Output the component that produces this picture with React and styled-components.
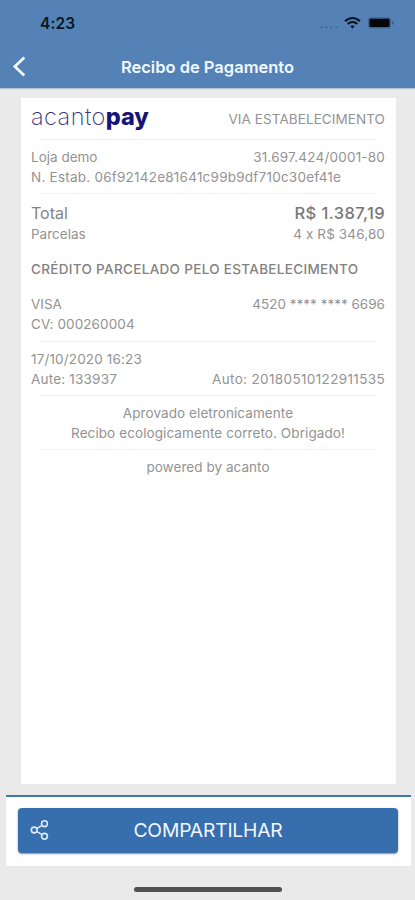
import React from "react";
import styled, { createGlobalStyle } from "styled-components";

const GlobalStyle = createGlobalStyle`
  * { box-sizing: border-box; }
  body { margin: 0; background: #eaeaea; }
`;

const Screen = styled.div`
  width: 415px;
  height: 900px;
  display: flex;
  flex-direction: column;
  overflow: hidden;
  background: #eaeaea;
  font-family: Inter, "Liberation Sans", sans-serif;
  color: #8b8b8b;
`;

const Header = styled.header`
  height: 88px;
  flex: none;
  background: #5482b7;
  box-shadow: 0 1px 1px #b5c2cc;
`;

const StatusBar = styled.div`
  height: 46px;
  display: flex;
  align-items: center;
  justify-content: space-between;
  padding: 0 20px 0 40px;
`;

const Clock = styled.span`
  font-size: 15.5px;
  font-weight: 600;
  letter-spacing: 0.15px;
  color: #0c1723;
`;

const StatusIcons = styled.svg`
  width: 76px;
  height: 14px;
  display: block;
`;

const NavBar = styled.div`
  height: 42px;
  display: grid;
  grid-template-columns: 40px 1fr 40px;
  align-items: center;
`;

const BackButton = styled.button`
  width: 40px;
  height: 42px;
  padding: 0;
  border: 0;
  background: none;
  svg { display: block; }
`;

const Title = styled.h1`
  margin: 0;
  text-align: center;
  font-size: 16.5px;
  font-weight: 600;
  line-height: 20px;
  color: #f2f8ff;
`;

const Receipt = styled.main`
  width: 375px;
  height: 686px;
  flex: none;
  margin: 10px 0 0 21px;
  padding: 0 11px 0 10px;
  background: #fff;
`;

const Section = styled.section`
  padding: ${(p) => p.$pad || "7px 0 6px"};
`;

const Row = styled.div`
  height: ${(p) => p.$height || 20}px;
  margin-top: ${(p) => p.$gap || 0}px;
  display: flex;
  align-items: center;
  justify-content: ${(p) => (p.$center ? "center" : "space-between")};
`;

const Text = styled.span`
  font-size: ${(p) => p.$size || 13.5}px;
  font-weight: ${(p) => p.$weight || 400};
  letter-spacing: ${(p) => p.$track || 0}px;
  line-height: 20px;
  white-space: nowrap;
  color: ${(p) => p.$color || "#939393"};
`;

const Divider = styled.hr`
  height: 1px;
  margin: 0 8px 0 9px;
  border: 0;
  background: #f0f0f0;
`;

const Logo = styled.div`
  padding-bottom: 4px;
  font-size: 23.5px;
  font-weight: 200;
  line-height: 28px;
  letter-spacing: 0.45px;
  color: #34347f;
  b { font-weight: 800; color: #15157a; letter-spacing: -0.1px; }
`;

const Footer = styled.footer`
  width: 405px;
  height: 71px;
  flex: none;
  margin: 11px 0 0 6px;
  padding: 11px 12px 0;
  border-top: 2px solid #3e78b0;
  background: #fff;
`;

const ShareButton = styled.button`
  width: 380px;
  height: 45px;
  display: grid;
  grid-template-columns: 44px 1fr 44px;
  align-items: center;
  padding: 0 0 1px;
  border: 0;
  border-radius: 4px;
  background: #376eae;
  box-shadow: 0 1px 2px rgba(0, 0, 0, 0.45);
  font-family: inherit;
  svg { display: block; margin-left: 12px; }
`;

const ShareLabel = styled.span`
  text-align: center;
  font-size: 19.3px;
  letter-spacing: -0.2px;
  color: #f2f8ff;
`;

const HomeIndicator = styled.div`
  width: 148px;
  height: 5px;
  flex: none;
  margin: 21px 0 0 134px;
  border-radius: 3px;
  background: #505050;
`;

export default function App() {
  return (
    <Screen>
      <GlobalStyle />
      <Header>
        <StatusBar>
          <Clock>4:23</Clock>
          <StatusIcons viewBox="0 0 76 14">
            <g fill="#466d9c">
              <circle cx="2.5" cy="11.3" r="1.2" />
              <circle cx="7.5" cy="11.3" r="1.2" />
              <circle cx="12.5" cy="11.3" r="1.2" />
              <circle cx="17.5" cy="11.3" r="1.2" />
            </g>
            <g fill="none" stroke="#0a1420" strokeWidth="2.1">
              <path d="M26 5.3C30.5 0.9 36.5 0.9 41 5.3" />
              <path d="M28.7 8.1C31.6 5.3 35.4 5.3 38.3 8.1" />
            </g>
            <path d="M33.5 12.5l-2.2-2.3c1.2-1.1 3.2-1.1 4.4 0z" fill="#0a1420" />
            <rect x="49" y="1.2" width="23" height="11.4" rx="3" fill="#3f658f" />
            <rect x="50.5" y="2.8" width="20" height="8.2" rx="1.3" fill="#03070b" />
            <path d="M73.3 4.7c2 .8 2 3.6 0 4.4z" fill="#36587f" />
          </StatusIcons>
        </StatusBar>
        <NavBar>
          <BackButton aria-label="Voltar">
            <svg width="40" height="42" viewBox="0 0 40 42">
              <path d="M24.3 11.5L14.8 20.5L24.3 29.5" fill="none" stroke="#f5faff" strokeWidth="2.7" />
            </svg>
          </BackButton>
          <Title>Recibo de Pagamento</Title>
        </NavBar>
      </Header>

      <Receipt>
        <Row $height={41}>
          <Logo>acanto<b>pay</b></Logo>
          <Text $track={0.08}>VIA ESTABELECIMENTO</Text>
        </Row>
        <Divider />
        <Section>
          <Row>
            <Text>Loja demo</Text>
            <Text $track={0.2}>31.697.424/0001-80</Text>
          </Row>
          <Row>
            <Text $track={0.23}>N. Estab. 06f92142e81641c99b9df710c30ef41e</Text>
          </Row>
        </Section>
        <Divider />
        <Section $pad="9px 0 7px">
          <Row>
            <Text $size={16} $color="#858585">Total</Text>
            <Text $size={16.5} $weight={500} $track={0.4} $color="#777">R$ 1.387,19</Text>
          </Row>
          <Row $gap={1}>
            <Text>Parcelas</Text>
            <Text $track={0.12}>4 x R$ 346,80</Text>
          </Row>
          <Row $gap={15}>
            <Text $weight={500} $track={0.32} $color="#828282">CRÉDITO PARCELADO PELO ESTABELECIMENTO</Text>
          </Row>
          <Row $gap={15}>
            <Text>VISA</Text>
            <Text>4520 **** **** 6696</Text>
          </Row>
          <Row>
            <Text $track={0.1}>CV: 000260004</Text>
          </Row>
        </Section>
        <Divider />
        <Section>
          <Row>
            <Text $track={0.15}>17/10/2020 16:23</Text>
          </Row>
          <Row>
            <Text $track={0.2}>Aute: 133937</Text>
            <Text $track={0.36}>Auto: 20180510122911535</Text>
          </Row>
        </Section>
        <Divider />
        <Section>
          <Row $center>
            <Text $track={0.08}>Aprovado eletronicamente</Text>
          </Row>
          <Row $center>
            <Text $track={0.09}>Recibo ecologicamente correto. Obrigado!</Text>
          </Row>
        </Section>
        <Divider />
        <Section>
          <Row $center>
            <Text $track={0.05}>powered by acanto</Text>
          </Row>
        </Section>
      </Receipt>

      <Footer>
        <ShareButton>
          <svg width="20" height="22" viewBox="0 0 20 22" fill="none" stroke="#dcebfb" strokeWidth="1.6">
            <circle cx="4.2" cy="11" r="2.9" />
            <circle cx="14.5" cy="4.7" r="2.9" />
            <circle cx="14.5" cy="17.3" r="2.9" />
            <path d="M7 9.4l5-3M7 12.6l5 3" />
          </svg>
          <ShareLabel>COMPARTILHAR</ShareLabel>
        </ShareButton>
      </Footer>
      <HomeIndicator />
    </Screen>
  );
}
